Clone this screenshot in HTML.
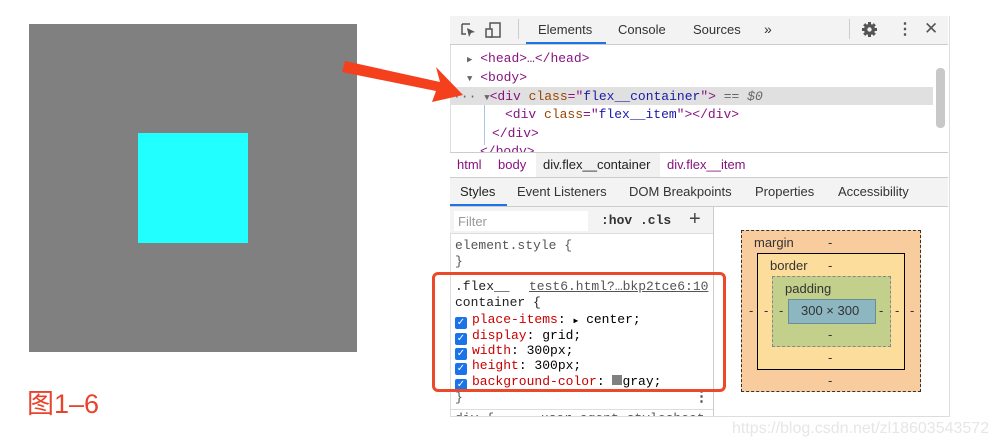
<!DOCTYPE html><html><head><meta charset="utf-8"><style>
body{margin:0;width:998px;height:448px;background:#fff;position:relative;overflow:hidden;font-family:"Liberation Sans",sans-serif}
.a{position:absolute}
.m{font-family:"Liberation Mono",monospace;font-size:13px;white-space:nowrap}
.t{font-size:13px;color:#333;white-space:nowrap}
.tag{color:#881280}.at{color:#994500}.av{color:#1a1aa6}
.cb{display:inline-block;width:12px;height:12px;background:#1a73e8;border-radius:2px;vertical-align:-2px;margin-right:5px;color:#fff;font-size:10px;line-height:12px;text-align:center;font-family:"DejaVu Sans",sans-serif}
.p{color:#c80000}
</style></head><body>
<div class="a" style="left:29px;top:24px;width:328px;height:328px;background:#808080"></div>
<div class="a" style="left:138px;top:133px;width:110px;height:110px;background:#2ff"></div>
<div class="a" style="left:27px;top:382px;font-size:27px;color:#e8432d;font-family:'Liberation Sans','Noto Sans CJK SC',sans-serif">图1–6</div>

<div class="a" style="left:450px;top:16px;width:498px;height:400px;border:1px solid #ddd;border-top:none;background:#fff"></div>
<div class="a" style="left:450px;top:16px;width:498px;height:28px;background:#f3f3f3;border-bottom:1px solid #ccc"></div>
<svg class="a" style="left:458px;top:20px" width="50" height="20"><path d="M4 4h8M4 4v10h4" stroke="#555" fill="none" stroke-width="1.5"/><path d="M9 8l8 4-4 1-2 4z" fill="#555"/><rect x="32" y="3" width="10" height="14" fill="none" stroke="#555" stroke-width="1.5"/><rect x="28" y="9" width="6" height="8" fill="#f3f3f3" stroke="#555" stroke-width="1.5"/></svg>
<div class="a" style="left:518px;top:19px;width:1px;height:20px;background:#ccc"></div>
<div class="a t" style="left:538px;top:22px">Elements</div>
<div class="a" style="left:526px;top:42px;width:80px;height:2px;background:#1a73e8"></div>
<div class="a t" style="left:618px;top:22px">Console</div>
<div class="a t" style="left:693px;top:22px">Sources</div>
<div class="a t" style="left:764px;top:21px;font-size:14px">»</div>
<div class="a" style="left:849px;top:19px;width:1px;height:20px;background:#ccc"></div>
<svg class="a" style="left:861px;top:21px" width="17" height="17" viewBox="0 0 17 17"><circle cx="8.5" cy="8.5" r="5.5" fill="#555"/><g stroke="#555" stroke-width="3"><path d="M8.5 1v15M1 8.5h15M3.2 3.2l10.6 10.6M13.8 3.2L3.2 13.8"/></g><circle cx="8.5" cy="8.5" r="2.2" fill="#f3f3f3"/></svg>
<div class="a" style="left:897px;top:19px;font-size:16px;color:#555;font-weight:bold">⋮</div>
<div class="a" style="left:924px;top:19px;font-size:17px;color:#555;font-family:'DejaVu Sans'">✕</div>

<div class="a" style="left:450px;top:87px;width:483px;height:18px;background:#e0e0e0"></div>
<div class="a" style="left:936px;top:68px;width:9px;height:60px;background:#c8c8c8;border-radius:4px"></div>
<div class="a m" style="left:467px;top:51px"><span style="font-size:9px;color:#666">▶</span> <span class="tag">&lt;head&gt;…&lt;/head&gt;</span></div>
<div class="a m" style="left:467px;top:70px"><span style="font-size:9px;color:#666">▼</span> <span class="tag">&lt;body&gt;</span></div>
<div class="a m" style="left:453px;top:89px"><span style="color:#666">··· </span> <span style="font-size:9px;color:#666">▼</span><span class="tag">&lt;div</span> <span class="at">class</span><span class="tag">="</span><span class="av">flex__container</span><span class="tag">"&gt;</span> <span style="color:#666">== <i>$0</i></span></div>
<div class="a" style="left:484px;top:105px;width:1px;height:40px;background:#a8c4e8"></div>
<div class="a m" style="left:505px;top:107px"><span class="tag">&lt;div</span> <span class="at">class</span><span class="tag">="</span><span class="av">flex__item</span><span class="tag">"&gt;&lt;/div&gt;</span></div>
<div class="a m" style="left:492px;top:126px"><span class="tag">&lt;/div&gt;</span></div>
<div class="a m" style="left:480px;top:144px;height:8px;overflow:hidden"><span class="tag">&lt;/body&gt;</span></div>

<div class="a" style="left:450px;top:152px;width:498px;height:24px;border-top:1px solid #ccc;border-bottom:1px solid #ccc;background:#fff"></div>
<div class="a" style="left:536px;top:153px;width:124px;height:24px;background:#f1f1f1"></div>
<div class="a t" style="left:457px;top:157px;color:#881280">html</div>
<div class="a t" style="left:498px;top:157px;color:#881280">body</div>
<div class="a t" style="left:543px;top:157px;color:#222">div.flex__container</div>
<div class="a t" style="left:667px;top:157px;color:#881280">div.flex__item</div>

<div class="a" style="left:450px;top:178px;width:498px;height:28px;background:#f3f3f3;border-bottom:1px solid #ccc"></div>
<div class="a t" style="left:460px;top:184px;color:#222">Styles</div>
<div class="a" style="left:450px;top:204px;width:57px;height:2px;background:#1a73e8"></div>
<div class="a t" style="left:517px;top:184px">Event Listeners</div>
<div class="a t" style="left:629px;top:184px">DOM Breakpoints</div>
<div class="a t" style="left:755px;top:184px">Properties</div>
<div class="a t" style="left:838px;top:184px">Accessibility</div>

<div class="a" style="left:713px;top:207px;width:1px;height:209px;background:#ccc"></div>
<div class="a" style="left:450px;top:207px;width:263px;height:26px;background:#f3f3f3;border-bottom:1px solid #ddd"></div>
<div class="a" style="left:454px;top:211px;width:134px;height:20px;background:#fff"></div>
<div class="a t" style="left:458px;top:214px;color:#999">Filter</div>
<div class="a m" style="left:601px;top:213px;font-weight:bold;color:#333">:hov .cls</div>
<div class="a" style="left:689px;top:208px;font-size:20px;color:#444">+</div>
<div class="a m" style="left:455px;top:238px;color:#555">element.style {</div>
<div class="a m" style="left:455px;top:254px;color:#555">}</div>
<div class="a" style="left:450px;top:273px;width:263px;height:1px;background:#ddd"></div>
<div class="a m" style="left:455px;top:279px;color:#222">.flex__</div>
<div class="a m" style="left:529px;top:279px;color:#555;text-decoration:underline">test6.html?…bkp2tce6:10</div>
<div class="a m" style="left:455px;top:295px;color:#222">container {</div>
<div class="a m" style="left:455px;top:312px"><span class="cb">✓</span><span class="p">place-items</span>: <span style="font-size:8px">▶</span> center;</div>
<div class="a m" style="left:455px;top:328px"><span class="cb">✓</span><span class="p">display</span>: grid;</div>
<div class="a m" style="left:455px;top:343px"><span class="cb">✓</span><span class="p">width</span>: 300px;</div>
<div class="a m" style="left:455px;top:358px"><span class="cb">✓</span><span class="p">height</span>: 300px;</div>
<div class="a m" style="left:455px;top:374px"><span class="cb">✓</span><span class="p">background-color</span>: <span style="display:inline-block;width:10px;height:10px;background:gray"></span>gray;</div>
<div class="a m" style="left:455px;top:390px;color:#555">}</div>
<div class="a" style="left:694px;top:387px;font-size:15px;color:#555;font-weight:bold">⋮</div>
<div class="a" style="left:450px;top:409px;width:263px;height:1px;background:#ddd"></div>
<div class="a m" style="left:455px;top:411px;height:5px;overflow:hidden;color:#555">div {&nbsp;&nbsp;&nbsp;&nbsp;&nbsp;&nbsp;user agent stylesheet</div>
<div class="a" style="left:432px;top:272px;border:3px solid #ea4a2a;border-radius:6px;box-sizing:border-box;width:294px;height:120px"></div>

<div class="a" style="left:741px;top:230px;width:178px;height:160px;background:#f9cc9d;border:1px dashed #333"></div>
<div class="a t" style="left:754px;top:235px">margin</div><div class="a t" style="left:828px;top:235px">-</div>
<div class="a" style="left:757px;top:253px;width:146px;height:115px;background:#fddd9b;border:1px solid #000"></div>
<div class="a t" style="left:770px;top:258px">border</div><div class="a t" style="left:828px;top:258px">-</div>
<div class="a" style="left:772px;top:276px;width:117px;height:69px;background:#c3d08b;border:1px dashed #888"></div>
<div class="a t" style="left:785px;top:281px">padding</div>
<div class="a" style="left:788px;top:299px;width:86px;height:23px;background:#8cb6c0;border:1px solid #6a8d96"></div>
<div class="a t" style="left:801px;top:303px">300 × 300</div>
<div class="a t" style="left:828px;top:327px">-</div><div class="a t" style="left:828px;top:350px">-</div><div class="a t" style="left:828px;top:373px">-</div>
<div class="a t" style="left:749px;top:303px">-</div><div class="a t" style="left:764px;top:303px">-</div><div class="a t" style="left:779px;top:303px">-</div>
<div class="a t" style="left:879px;top:303px">-</div><div class="a t" style="left:895px;top:303px">-</div><div class="a t" style="left:910px;top:303px">-</div>
<div class="a" style="left:732px;top:420px;font-size:16px;color:#e6e6e6;white-space:nowrap">https://blog.csdn.net/zl18603543572</div>

<svg class="a" style="left:0;top:0" width="998" height="448"><path d="M345 61L440 82L436 67L463 95L432 102L436 91L342 72Z" fill="#f4401c"/></svg>
</body></html>
